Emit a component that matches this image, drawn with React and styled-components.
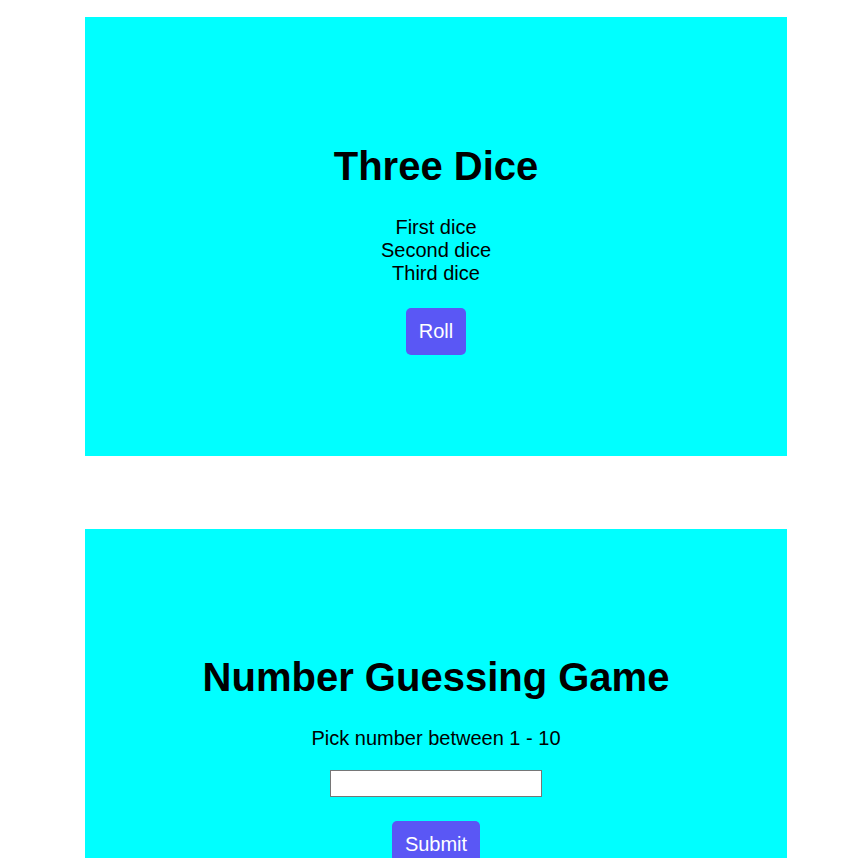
import React, { useState } from "react";
import styled, { createGlobalStyle } from "styled-components";

const GlobalStyle = createGlobalStyle`
  body {
    margin: 0;
    background: #ffffff;
    font-family: "Liberation Sans", Arial, sans-serif;
  }
`;

const Page = styled.div`
  padding: 17px 0 0 85px;
`;

const Panel = styled.section`
  width: 702px;
  height: 439px;
  background: #00ffff;
  display: flex;
  flex-direction: column;
  align-items: center;
  justify-content: center;
  margin-bottom: 73px;
  color: #000;
`;

const Title = styled.h1`
  font-size: 40px;
  font-weight: bold;
  margin: 26.8px 0;
  line-height: 46px;
`;

const Lines = styled.div`
  font-size: 20px;
  line-height: 23px;
  text-align: center;
`;

const Text = styled.p`
  font-size: 20px;
  line-height: 23px;
  margin: 0 0 20.5px;
`;

const Input = styled.input`
  width: 212px;
  height: 27px;
  box-sizing: border-box;
  border: 1px solid #767676;
  background: #fff;
  padding: 1px 2px;
  margin: 0;
`;

const Button = styled.button`
  margin: 23.5px 0 2px;
  background: #5a57f5;
  color: #fff;
  border: none;
  border-radius: 5px;
  padding: 12px 12.5px;
  font-family: "Liberation Sans", Arial, sans-serif;
  font-size: 20px;
  line-height: 23px;
  cursor: pointer;
`;

export default function App() {
  const [guess, setGuess] = useState("");
  return (
    <>
      <GlobalStyle />
      <Page>
        <Panel>
          <Title>Three Dice</Title>
          <Lines>
            <div>First dice</div>
            <div>Second dice</div>
            <div>Third dice</div>
          </Lines>
          <Button>Roll</Button>
        </Panel>
        <Panel>
          <Title>Number Guessing Game</Title>
          <Text>Pick number between 1 - 10</Text>
          <Input value={guess} onChange={(e) => setGuess(e.target.value)} />
          <Button>Submit</Button>
        </Panel>
      </Page>
    </>
  );
}
